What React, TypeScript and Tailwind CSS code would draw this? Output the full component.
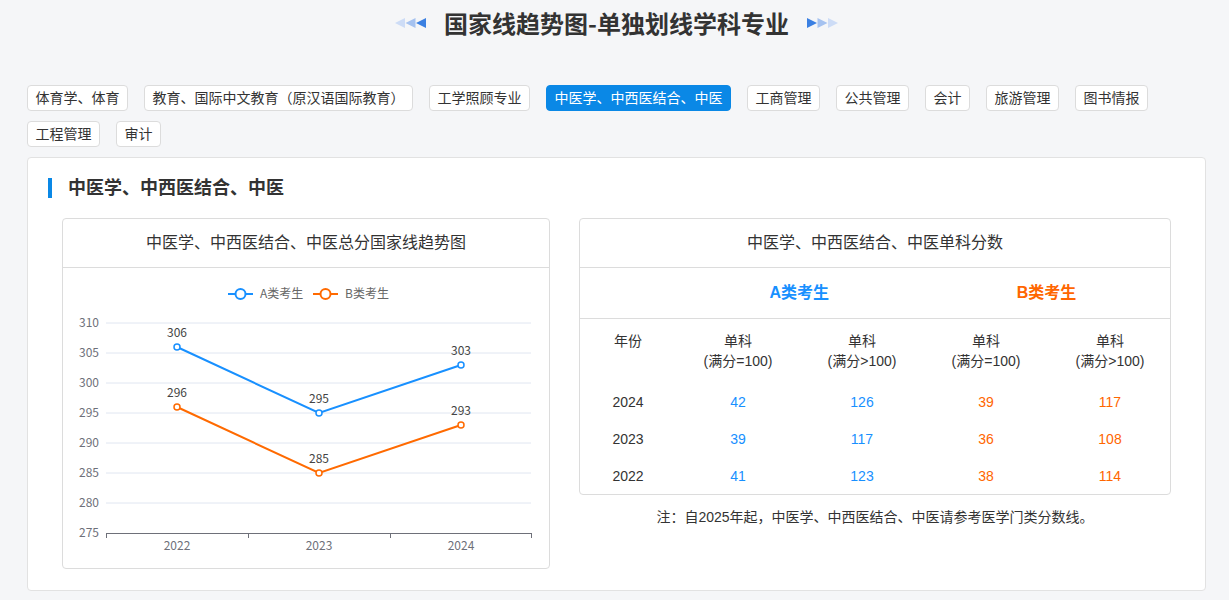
const TABS = [
  "体育学、体育",
  "教育、国际中文教育（原汉语国际教育）",
  "工学照顾专业",
  "中医学、中西医结合、中医",
  "工商管理",
  "公共管理",
  "会计",
  "旅游管理",
  "图书情报",
  "工程管理",
  "审计",
];

const ACTIVE = "中医学、中西医结合、中医";

const ROWS = [
  { year: "2024", a1: 42, a2: 126, b1: 39, b2: 117 },
  { year: "2023", a1: 39, a2: 117, b1: 36, b2: 108 },
  { year: "2022", a1: 41, a2: 123, b1: 38, b2: 114 },
];

const BLUE = "#1890ff";
const ORANGE = "#ff6a00";

// y = 55 + (310 - v) * 6
const yOf = (v: number) => 55 + (310 - v) * 6;
const XS = [114, 256, 398];
const SERIES_A = [306, 295, 303];
const SERIES_B = [296, 285, 293];

function Arrows({ dir }: { dir: "left" | "right" }) {
  const colors = dir === "left" ? ["#cddcf6", "#a5c2f0", "#3b80e2"] : ["#3b80e2", "#a5c2f0", "#cddcf6"];
  return (
    <svg width="31" height="10" viewBox="0 0 31 10">
      {colors.map((c, i) => {
        const x = i * 10.5;
        const pts = dir === "left" ? `${x + 10},0 ${x + 10},10 ${x},5` : `${x},0 ${x},10 ${x + 10},5`;
        return <polygon key={i} points={pts} fill={c} />;
      })}
    </svg>
  );
}

function TrendChart() {
  const ticks = [310, 305, 300, 295, 290, 285, 280, 275];
  const line = (data: number[]) => data.map((v, i) => `${XS[i]},${yOf(v)}`).join(" ");
  const axisY = yOf(275);
  return (
    <svg width="486" height="300" viewBox="0 0 486 300" className="block font-['Noto_Sans_CJK_SC',sans-serif]">
      {/* legend */}
      <line x1="165" y1="26" x2="190" y2="26" stroke={BLUE} strokeWidth="2" />
      <circle cx="177.5" cy="26" r="5" fill="#fff" stroke={BLUE} strokeWidth="2" />
      <text x="197" y="30" fontSize="12" fill="#666">A类考生</text>
      <line x1="250" y1="26" x2="275" y2="26" stroke={ORANGE} strokeWidth="2" />
      <circle cx="262.5" cy="26" r="5" fill="#fff" stroke={ORANGE} strokeWidth="2" />
      <text x="282" y="30" fontSize="12" fill="#666">B类考生</text>

      {/* grid + y labels */}
      {ticks.map((t) => (
        <g key={t}>
          {t !== 275 && <line x1="43" x2="468" y1={yOf(t)} y2={yOf(t)} stroke="#e0e6f1" strokeWidth="1" />}
          <text x="36" y={yOf(t) + 4} fontSize="12" fill="#6e7079" textAnchor="end">{t}</text>
        </g>
      ))}

      {/* x axis */}
      <line x1="43" x2="468" y1={axisY + 0.5} y2={axisY + 0.5} stroke="#6e7079" strokeWidth="1" />
      {[43, 185, 327, 468].map((x) => (
        <line key={x} x1={x + 0.5} x2={x + 0.5} y1={axisY} y2={axisY + 5} stroke="#6e7079" strokeWidth="1" />
      ))}
      {["2022", "2023", "2024"].map((y, i) => (
        <text key={y} x={XS[i]} y={axisY + 17} fontSize="12" fill="#6e7079" textAnchor="middle">{y}</text>
      ))}

      {/* series */}
      <polyline points={line(SERIES_A)} fill="none" stroke={BLUE} strokeWidth="2" />
      <polyline points={line(SERIES_B)} fill="none" stroke={ORANGE} strokeWidth="2" />
      {SERIES_A.map((v, i) => (
        <g key={`a${i}`}>
          <circle cx={XS[i]} cy={yOf(v)} r="3" fill="#fff" stroke={BLUE} strokeWidth="1.5" />
          <text x={XS[i]} y={yOf(v) - 10} fontSize="12" fill="#444" textAnchor="middle">{v}</text>
        </g>
      ))}
      {SERIES_B.map((v, i) => (
        <g key={`b${i}`}>
          <circle cx={XS[i]} cy={yOf(v)} r="3" fill="#fff" stroke={ORANGE} strokeWidth="1.5" />
          <text x={XS[i]} y={yOf(v) - 10} fontSize="12" fill="#444" textAnchor="middle">{v}</text>
        </g>
      ))}
    </svg>
  );
}

export default function App() {
  return (
    <div className="min-h-[600px] bg-[#f5f6f8] pl-[27px] pr-[23px] pt-[7px] font-['Liberation_Sans','Noto_Sans_CJK_SC',sans-serif] text-[#333]">
      {/* Title */}
      <div className="flex h-8 items-center justify-center">
        <Arrows dir="left" />
        <h1 className="mx-[18px] font-['Noto_Sans_CJK_SC',sans-serif] text-2xl font-bold leading-8 text-[#333]">
          国家线趋势图-单独划线学科专业
        </h1>
        <Arrows dir="right" />
      </div>

      {/* Tabs */}
      <div className="mt-[46px] flex flex-wrap gap-x-4 gap-y-[10px]">
        {TABS.map((t) => (
          <button
            key={t}
            type="button"
            className={
              t === ACTIVE
                ? "rounded-[4px] border border-[#0a88e6] bg-[#0a88e6] px-[7.5px] text-sm leading-6 text-white"
                : "rounded-[4px] border border-[#dcdcdc] bg-white px-[7.5px] text-sm leading-6 text-[#333]"
            }
          >
            {t}
          </button>
        ))}
      </div>

      {/* Card */}
      <div className="mt-[10px] rounded-[4px] border border-[#e2e2e2] bg-white px-[34px] pb-[21px] pt-5">
        <div className="-ml-[14px] flex h-5 items-center border-l-4 border-[#0a88e6] pl-4">
          <h2 className="text-lg font-bold text-[#333]">中医学、中西医结合、中医</h2>
        </div>

        <div className="mt-5 flex items-start justify-between">
          {/* Trend chart panel */}
          <div className="w-[488px] rounded-[4px] border border-[#dcdcdc]">
            <div className="flex h-[49px] items-center justify-center border-b border-[#dcdcdc] text-base">
              中医学、中西医结合、中医总分国家线趋势图
            </div>
            <TrendChart />
          </div>

          {/* Single subject panel */}
          <div className="w-[592px]">
            <div className="rounded-[4px] border border-[#dcdcdc]">
              <div className="flex h-[49px] items-center justify-center border-b border-[#dcdcdc] text-base">
                中医学、中西医结合、中医单科分数
              </div>
              <div className="flex h-[51px] items-center border-b border-[#dcdcdc] text-base font-bold">
                <div className="w-[96px]" />
                <div className="w-[248px] text-center text-[#1890ff]">A类考生</div>
                <div className="w-[248px] text-center text-[#ff6600]">B类考生</div>
              </div>
              <table className="w-full table-fixed text-sm leading-5">
                <colgroup>
                  <col className="w-[96px]" />
                  <col className="w-[124px]" />
                  <col className="w-[124px]" />
                  <col className="w-[124px]" />
                  <col className="w-[124px]" />
                </colgroup>
                <thead>
                  <tr>
                    <th className="py-3 align-top font-normal">年份</th>
                    {["=100", ">100", "=100", ">100"].map((s, i) => (
                      <th key={i} className="py-3 font-normal">
                        单科
                        <br />
                        (满分{s})
                      </th>
                    ))}
                  </tr>
                </thead>
                <tbody>
                  {ROWS.map((r) => (
                    <tr key={r.year} className="h-[37px] text-center">
                      <td>{r.year}</td>
                      <td className="text-[#1890ff]">{r.a1}</td>
                      <td className="text-[#1890ff]">{r.a2}</td>
                      <td className="text-[#ff6600]">{r.b1}</td>
                      <td className="text-[#ff6600]">{r.b2}</td>
                    </tr>
                  ))}
                </tbody>
              </table>
            </div>
            <p className="mt-3 text-center text-sm leading-5">
              注：自2025年起，中医学、中西医结合、中医请参考医学门类分数线。
            </p>
          </div>
        </div>
      </div>
    </div>
  );
}
